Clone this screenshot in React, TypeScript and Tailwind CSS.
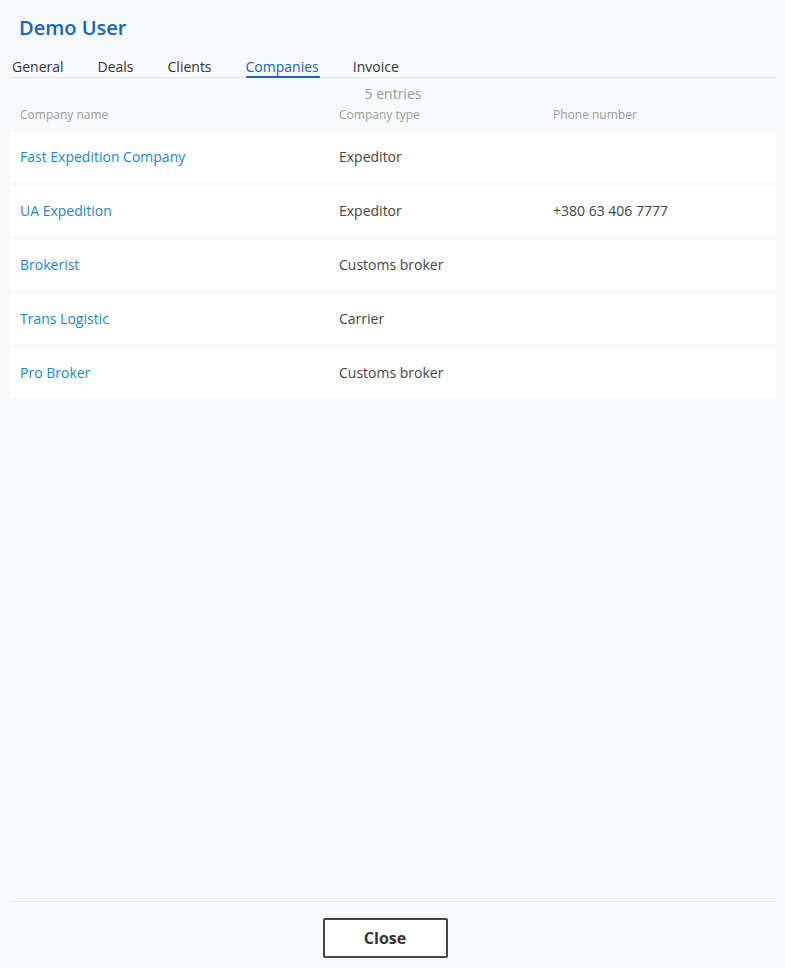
import React from "react";

const rows = [
  { name: "Fast Expedition Company", type: "Expeditor", phone: "" },
  { name: "UA Expedition", type: "Expeditor", phone: "+380 63 406 7777" },
  { name: "Brokerist", type: "Customs broker", phone: "" },
  { name: "Trans Logistic", type: "Carrier", phone: "" },
  { name: "Pro Broker", type: "Customs broker", phone: "" },
];

const tabs = ["General", "Deals", "Clients", "Companies", "Invoice"];

export default function App() {
  return (
    <div
      className="w-[785px] h-[968px] bg-[#f8f9fb] flex flex-col"
      style={{ fontFamily: '"Open Sans", "Noto Sans", sans-serif' }}
    >
      <div className="pl-[10px] pr-[9px] flex-1 flex flex-col">
        <h1 className="pl-[9px] pt-[14px] text-[20px] leading-[28px] font-semibold text-[#1565c0]">
          Demo User
        </h1>
        <div className="mt-[15px] flex gap-[34px] pl-[2px] border-b border-[#e1e4e8] h-[21px]">
          {tabs.map((t) => (
            <div
              key={t}
              className={
                t === "Companies"
                  ? "relative text-[14px] leading-[19px] text-[#1565c0]"
                  : "text-[14px] leading-[19px] text-[#333]"
              }
            >
              {t}
              {t === "Companies" && (
                <div className="absolute left-0 right-[-1px] top-[19px] h-[2px] bg-[#1565c0] rounded-sm" />
              )}
            </div>
          ))}
        </div>
        <div className="text-center text-[14px] leading-[20px] text-[#999] mt-[6px]">5 entries</div>
        <div className="grid grid-cols-[319px_214px_1fr] px-[10px] text-[12px] leading-[16px] text-[#999] mt-[3px]">
          <div>Company name</div>
          <div>Company type</div>
          <div>Phone number</div>
        </div>
        <div className="mt-[9px] flex flex-col gap-[4px]">
          {rows.map((r) => (
            <div
              key={r.name}
              className="grid grid-cols-[319px_214px_1fr] items-center px-[10px] pb-[2px] h-[50px] bg-white text-[14px] leading-[19px]"
            >
              <div className="text-[#1a86d0]">{r.name}</div>
              <div className="text-[#444]">{r.type}</div>
              <div className="text-[#444]">{r.phone}</div>
            </div>
          ))}
        </div>
      </div>
      <div className="ml-[10px] mr-[9px] border-t border-[#e6e8eb] h-[67px] flex justify-center pt-[16px] pr-[16px]">
        <button className="w-[125px] h-[40px] border-2 border-[#444] rounded-[2px] bg-white text-[16px] font-bold text-[#333]">
          Close
        </button>
      </div>
    </div>
  );
}
